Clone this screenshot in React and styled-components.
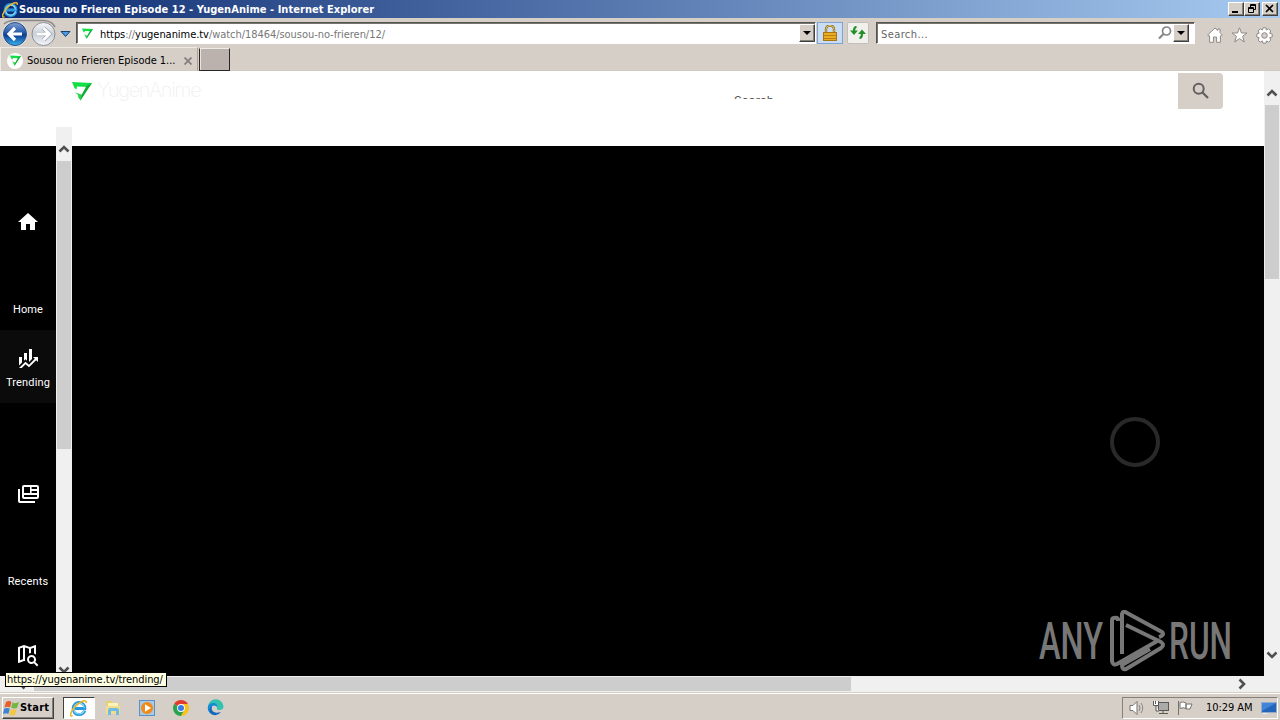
import React from "react";
import styled, { createGlobalStyle } from "styled-components";

const navItems = [
    { name: "Home", label: "Home", top: 64, gap: 68, bottom: 13 },
    { name: "Trending", label: "Trending", top: 16, gap: 5, bottom: 13, active: true },
    { name: "Recents", label: "Recents", top: 79, gap: 68, bottom: 13 },
    { name: "Discover", top: 41, gap: 0, bottom: 0 },
];

const navIcons = {
    Home: <path d="M10 20V14H14V20H19V12H22L12 3L2 12H5V20Z" />,
    Trending: (
        <path d="M6 16.5L3 19.44V11H6M11 14.66L9.43 13.32L8 14.64V7H11M16 13L13 16V3H16M18.81 12.81L17 11H22V16L20.21 14.21L13 21.36L9.53 18.34L5.75 22H3L9.47 15.66L13 18.64" />
    ),
    Recents: (
        <path
            fillRule="evenodd"
            d="M2 7H4V19H19V21H4Q2 21 2 19ZM8 3H21Q23 3 23 5V15Q23 17 21 17H8Q6 17 6 15V5Q6 3 8 3ZM8 5V11H14V5ZM15.6 5V7H21V5ZM15.6 9V11H21V9ZM8 13V15H21V13Z"
        />
    ),
    Discover: (
        <path
            fillRule="evenodd"
            d="M15.5 12A4.5 4.5 0 0 1 19.31 18.9L22.39 22L21 23.39L17.88 20.32A4.5 4.5 0 1 1 15.5 12M15.5 14A2.5 2.5 0 1 0 15.5 19A2.5 2.5 0 0 0 15.5 14M19.5 2A.5.5 0 0 1 20 2.5V11.81A6.4 6.4 0 0 0 18 10.5V4.7L15 5.86V10.03A6.4 6.4 0 0 0 13 10.5V5.87L9 4.47V16.13L9.03 16.12L9 16.5C9 17.14 9.09 17.76 9.26 18.34L8 17.9L2.66 19.97L2.5 20A.5.5 0 0 1 2 19.5V4.38C2 4.15 2.15 3.97 2.36 3.9L8 2L14 4.1L19.34 2.03ZM4 5.46V17.31L7 16.15V4.45Z"
        />
    ),
};

function BrandIcon({ size }) {
    return (
        <svg width={size} height={size} viewBox="0 0 20 20">
            <path d="M0 1L20 2L17 6L5 5.5L4.5 8.5L2.5 7Z" fill="#12df45" />
            <path d="M20 2L8.5 19.5L6.5 15.5L9.5 14L14.5 5Z" fill="#0cac31" />
            <path d="M3 11.5L9.5 13.5L9 19L6.5 17L6 14Z" fill="#25d64e" />
        </svg>
    );
}

function IeIcon({ size }) {
    return (
        <svg width={size} height={size} viewBox="0 0 18 18">
            <path
                d="M14.8 11.5C13.8 14.2 11.6 15.6 9 15.6C5.4 15.6 3.2 13 3.2 9.6C3.2 6.2 5.8 3.6 9 3.6C12.5 3.6 15 6.1 14.8 9.5H5"
                fill="none"
                stroke="#2a97dc"
                strokeWidth="3"
            />
            <path
                d="M14.5 10.8C13.2 14 11.2 15 9 15C5.5 15 3.8 12.5 3.8 9.6C3.8 6.7 6.1 4.3 9 4.3C12 4.3 14 6.2 14.2 9"
                fill="none"
                stroke="#8bdcfa"
                strokeWidth="1.2"
            />
            <path
                d="M2.7 16.6C-1 18.5.4 12.5 5.2 7.4C9.5 2.9 16.8-.9 16.2 4.2"
                fill="none"
                stroke="#e9b52c"
                strokeWidth="1.6"
            />
        </svg>
    );
}

function NavArrows() {
    return (
        <svg width="74" height="29" viewBox="0 0 74 29">
            <defs>
                <linearGradient id="back" x1="0" y1="0" x2="0" y2="1">
                    <stop offset="0" stopColor="#7ea0d3" />
                    <stop offset=".45" stopColor="#2458a8" />
                    <stop offset=".55" stopColor="#0b3d91" />
                    <stop offset="1" stopColor="#3fb4f0" />
                </linearGradient>
                <linearGradient id="forward" x1="0" y1="0" x2="0" y2="1">
                    <stop offset="0" stopColor="#f8f9fb" />
                    <stop offset=".5" stopColor="#c9cfd8" />
                    <stop offset="1" stopColor="#f4f7fa" />
                </linearGradient>
            </defs>
            <path
                d="M4 5Q8 1.5 15 1.5H44Q52 2 55 8"
                fill="none"
                stroke="#8b8a8b"
                strokeWidth="1.6"
            />
            <circle cx="15" cy="15" r="12.5" fill="#eeeef0" />
            <circle cx="15" cy="15" r="11.5" fill="url(#back)" stroke="#284d83" />
            <circle cx="43.5" cy="15" r="11.5" fill="url(#forward)" stroke="#8b8e94" />
            <path
                d="M22 15H10M15 9L9 15L15 21"
                fill="none"
                stroke="#fff"
                strokeWidth="3.2"
            />
            <path
                d="M36.5 15H48.5M43.5 9L49.5 15L43.5 21"
                fill="none"
                stroke="#9da3ac"
                strokeWidth="4.2"
            />
            <path
                d="M36.5 15H48.5M43.5 9L49.5 15L43.5 21"
                fill="none"
                stroke="#fff"
                strokeWidth="2.8"
            />
            <path d="M61 12.5H70L65.5 17.5Z" fill="#4c9be0" stroke="#174478" />
        </svg>
    );
}

function Chevron({ turn }) {
    return (
        <svg width="12" height="12" viewBox="0 0 12 12">
            <path
                d="M1.5 8.5L6 4L10.5 8.5"
                fill="none"
                stroke="#505050"
                strokeWidth="2.6"
                transform={`rotate(${turn} 6 6)`}
            />
        </svg>
    );
}

function DropButton() {
    return (
        <RaisedButton $w={16} $h={18}>
            <svg width="8" height="4" viewBox="0 0 8 4">
                <path d="M0 0H8L4 4Z" fill="#000" />
            </svg>
        </RaisedButton>
    );
}

function TitleBar() {
    return (
        <TitleStrip>
            <IeIcon size={17} />
            <Title>Sousou no Frieren Episode 12 - YugenAnime - Internet Explorer</Title>
            <WindowButtons>
                <RaisedButton $w={16} $h={14}>
                    <svg width="12" height="10">
                        <path d="M2 7H8V9H2Z" />
                    </svg>
                </RaisedButton>
                <RaisedButton $w={16} $h={14}>
                    <svg width="12" height="10" fill="none" stroke="#000">
                        <path d="M4.5 3V.5H9.5V5.5H8M4 1.5H10M2.5 3.5H7.5V8.5H2.5ZM2 4.5H8" />
                    </svg>
                </RaisedButton>
                <CloseGap />
                <RaisedButton $w={16} $h={14}>
                    <svg width="12" height="10">
                        <path d="M2 1L9 8M9 1L2 8" stroke="#000" strokeWidth="1.7" />
                    </svg>
                </RaisedButton>
            </WindowButtons>
        </TitleStrip>
    );
}

function AddressRow() {
    return (
        <Toolbar>
            <NavArrows />
            <AddressField>
                <BrandIcon size={11} />
                <Url>
                    <b>https</b>://<b>yugenanime.tv</b>/watch/18464/sousou-no-frieren/12/
                </Url>
                <DropButton />
            </AddressField>
            <LockButton>
                <svg width="14" height="16" viewBox="0 0 14 16">
                    <path d="M3 8V4.5A4 4 0 0 1 11 4.5V8" fill="none" stroke="#8d6b20" strokeWidth="2.4" />
                    <path d="M3 8V4.5A4 4 0 0 1 11 4.5V8" fill="none" stroke="#e5c765" />
                    <rect x=".5" y="7.5" width="13" height="8" fill="#e9ad22" stroke="#a87414" />
                    <path d="M1 10.5H13M1 13.5H13" stroke="#bd7f0e" />
                </svg>
            </LockButton>
            <RefreshButton>
                <svg width="16" height="14" viewBox="0 0 16 14">
                    <path d="M6.5 1Q4 1 4 5M9.5 12Q12 12 12 8" fill="none" stroke="#239129" strokeWidth="2.2" />
                    <path d="M0 4.5H8L4 9ZM8 8L12 3.5L16 8Z" fill="#239129" />
                </svg>
            </RefreshButton>
            <SearchField>
                <span>Search...</span>
                <svg width="14" height="14" viewBox="0 0 14 14" fill="none" stroke="#858585">
                    <circle cx="8.5" cy="5" r="4" strokeWidth="1.7" />
                    <path d="M5.5 8L1 12.5" strokeWidth="2.2" />
                </svg>
                <DropButton />
            </SearchField>
            <ToolIcons>
                <svg width="16" height="16" viewBox="0 0 16 16">
                    <path d="M.7 8L8 .9L10.8 3.5V2H13V5.6L15.3 8L14 9.3L13.4 8.8V15.3H9.6V10H6.4V15.3H2.6V8.8L2 9.3Z" />
                </svg>
                <svg width="17" height="16" viewBox="0 0 17 16">
                    <path d="M8.5.8L10.5 6H16L11.6 9.3L13.3 15L8.5 11.6L3.7 15L5.4 9.3L1 6H6.5Z" />
                </svg>
                <svg width="17" height="17" viewBox="0 0 17 17">
                    <path d="M7 .8H10L10.4 3L12.6 1.8L14.8 4L13.7 6.2L16.2 7V10L13.7 10.7L14.8 13L12.7 15.2L10.4 13.9L10 16.2H7L6.4 13.9L4.2 15.2L2.1 13L3.2 10.7L.8 10V7L3.2 6.2L2.1 4L4.2 1.8L6.4 3Z" />
                    <circle cx="8.5" cy="8.5" r="2.8" fill="#d5cfc8" />
                </svg>
            </ToolIcons>
        </Toolbar>
    );
}

function Tabs() {
    return (
        <TabStrip>
            <Tab>
                <TabIcon>
                    <BrandIcon size={11} />
                </TabIcon>
                <TabTitle>Sousou no Frieren Episode 1...</TabTitle>
                <svg width="8" height="8" viewBox="0 0 8 8">
                    <path d="M.5.5L7.5 7.5M7.5.5L.5 7.5" stroke="#858080" strokeWidth="1.8" />
                </svg>
            </Tab>
            <NewTab />
        </TabStrip>
    );
}

function Watermark() {
    return (
        <svg width="194" height="62" viewBox="0 0 194 62">
            <g fill="#777" fontFamily="Roboto, sans-serif" fontSize="51" fontWeight="500">
                <text x="1" y="49" textLength="64" lengthAdjust="spacingAndGlyphs">
                    ANY
                </text>
                <text x="131" y="49" textLength="63" lengthAdjust="spacingAndGlyphs">
                    RUN
                </text>
            </g>
            <g fill="none" stroke="#777" strokeWidth="4" strokeLinejoin="round">
                <path d="M80 11V9Q79 7 76 8Q74 8 74 11V51Q75 56 79 54L121 30" />
                <path d="M84 44V4Q85 0 89 3L124 22Q127 25 121 27" />
                <path d="M88 15L123 32Q127 35 123 38L88 59Q84 60 84 55L112 39" />
            </g>
        </svg>
    );
}

function Website() {
    return (
        <Page>
            <PageMain>
                <Header>
                    <BrandIcon size={20} />
                    <BrandName>YugenAnime</BrandName>
                    <SearchInput>
                        <span>Search</span>
                    </SearchInput>
                    <SearchButton>
                        <svg width="18" height="18" viewBox="0 0 18 18" fill="none" stroke="#626060">
                            <circle cx="6.7" cy="6.7" r="5" strokeWidth="2" />
                            <path d="M10.5 10.5L16 16" strokeWidth="2.3" />
                        </svg>
                    </SearchButton>
                </Header>
                <Body>
                    <SideNav>
                        {navItems.map((item) => (
                            <NavItem
                                key={item.name}
                                $top={item.top}
                                $bottom={item.bottom}
                                $gap={item.gap}
                                $active={item.active}
                            >
                                <svg width="24" height="24" viewBox="0 0 24 24" fill="#fff">
                                    {navIcons[item.name]}
                                </svg>
                                {item.label && <span>{item.label}</span>}
                            </NavItem>
                        ))}
                    </SideNav>
                    <ScrollBar $pad={16}>
                        <Chevron turn={0} />
                        <ScrollThumb $size={288} />
                        <Spacer />
                        <Chevron turn={180} />
                    </ScrollBar>
                    <Player>
                        <Spinner />
                        <Watermark />
                    </Player>
                </Body>
            </PageMain>
            <ScrollBar $pad={16} $end={15}>
                <Chevron turn={0} />
                <ScrollThumb $size={174} />
                <Spacer />
                <Chevron turn={180} />
            </ScrollBar>
        </Page>
    );
}

function Taskbar() {
    return (
        <TaskStrip>
            <StartButton>
                <svg width="17" height="16" viewBox="0 0 17 16">
                    <path d="M3 2Q6 0 8.5 2L7 7.5Q4.5 6 1.5 7.5Z" fill="#e75c29" />
                    <path d="M9.5 2.5Q12.5 4 16 2L14 8Q11 9 8.2 7.7Z" fill="#70b743" />
                    <path d="M1.2 8.7Q4 7.3 6.8 8.7L5.3 14Q3 12.5 0 14Z" fill="#3c83d1" />
                    <path d="M7.8 9Q10.5 10.5 13.7 9L12 15Q9 16 6.3 14.5Z" fill="#f5c640" />
                </svg>
                Start
            </StartButton>
            <TaskItem $active>
                <IeIcon size={18} />
            </TaskItem>
            <TaskItem>
                <svg width="16" height="16" viewBox="0 0 16 16">
                    <path d="M1 1H7L8 3H14V14H1Z" fill="#e7cf78" />
                    <path d="M3 3H13V8H3Z" fill="#fff4b8" />
                    <path d="M1 6H15V14H1Z" fill="#f3dc8d" />
                    <path d="M3 15V10Q3 8 5 8H12Q14 8 14 10V15H11V11H6V15Z" fill="#70bce0" />
                </svg>
            </TaskItem>
            <TaskItem>
                <svg width="16" height="16" viewBox="0 0 16 16">
                    <rect x=".5" y=".5" width="15" height="15" fill="#a9cae6" stroke="#5a90c4" />
                    <circle cx="8" cy="8" r="6" fill="#f28a18" />
                    <path d="M6 4.2L12 8L6 11.8Z" fill="#fff" />
                </svg>
            </TaskItem>
            <TaskItem>
                <svg width="16" height="16" viewBox="0 0 16 16">
                    <path d="M8 8L1.1 4A8 8 0 0 1 14.9 4Z" fill="#e33b2e" />
                    <path d="M8 8L1.1 4A8 8 0 0 0 8 16L11.4 10Z" fill="#2ba24c" />
                    <path d="M8 4H14.9A8 8 0 0 1 8 16L11.5 10Z" fill="#fbc116" />
                    <circle cx="8" cy="8" r="3.9" fill="#fff" />
                    <circle cx="8" cy="8" r="3" fill="#397de7" />
                </svg>
            </TaskItem>
            <TaskItem>
                <svg width="17" height="17" viewBox="0 0 17 17">
                    <path d="M1 8A7.7 7.7 0 0 1 16.5 8Q16 11 12 11Q9.5 11 10 9Q10 6 6 6Q2 6 1 9Z" fill="#35c1b0" />
                    <path d="M.8 9Q2 5 6 6Q4 8 5 11Q7 15 14 13Q10 18 5 15.5Q1 13 .8 9Z" fill="#1268bd" />
                    <path d="M.8 8Q2 4 6.5 4Q10 4 10.5 8Q8 5.5 5 7Q2 9 3 13Q.5 11 .8 8Z" fill="#1688d8" />
                </svg>
            </TaskItem>
            <Spacer />
            <Tray>
                <svg width="17" height="16" viewBox="0 0 17 16" fill="#fff" stroke="#77736e">
                    <path d="M1 5.5H4L8 1.5V14.5L4 10.5H1Z" />
                    <path d="M10 5Q12 8 10 11M12 3Q15.5 8 12 13" fill="none" stroke="#89857f" />
                </svg>
                <svg width="17" height="16" viewBox="0 0 17 16" fill="#fff" stroke="#5b5855">
                    <rect x="5.5" y="2.5" width="10" height="8" fill="#aaa" />
                    <path d="M6 13.5H15M10 11V13M.5 1V5.5H5.5V1M2.5 1V4M3 6V11H6" />
                </svg>
                <svg width="17" height="16" viewBox="0 0 17 16" fill="#fff" stroke="#77736e">
                    <path d="M1.5 1V15M3 2.5Q6 1 9 3V8.5Q6 7 3 8.5ZM9 4H15L13 9H9Z" />
                </svg>
                <Clock>10:29 AM</Clock>
                <svg width="16" height="14" viewBox="0 0 16 14">
                    <rect x=".5" y="1.5" width="15" height="10" fill="#2564bb" stroke="#92aacb" />
                    <path d="M1 2H15L1 10Z" fill="#4384d6" />
                    <path d="M2 12.5H6" stroke="#eee" />
                </svg>
            </Tray>
        </TaskStrip>
    );
}

function App() {
    return (
        <Screen>
            <GlobalStyle />
            <TitleBar />
            <AddressRow />
            <Tabs />
            <Website />
            <BottomScroll>
                <Chevron turn={-90} />
                <BottomThumb />
                <Spacer />
                <Chevron turn={90} />
            </BottomScroll>
            <Taskbar />
            <StatusTip>https://yugenanime.tv/trending/</StatusTip>
        </Screen>
    );
}

const GlobalStyle = createGlobalStyle`
    * {
        box-sizing: border-box;
    }
    body {
        margin: 0;
        overflow: hidden;
    }
    svg {
        display: block;
        flex: none;
    }
`;

const Screen = styled.div`
    position: relative;
    display: flex;
    flex-direction: column;
    width: 1280px;
    height: 720px;
    overflow: hidden;
    background: #d5cfc8;
    color: #000;
    font: 11px "DejaVu Sans Condensed", "DejaVu Sans", sans-serif;
    white-space: nowrap;
`;

const Spacer = styled.div`
    flex: 1;
`;

const RaisedButton = styled.div`
    display: flex;
    flex: none;
    align-items: center;
    justify-content: center;
    width: ${(props) => props.$w}px;
    height: ${(props) => props.$h}px;
    background: #d5cfc8;
    border: 1px solid;
    border-color: #fff #404040 #404040 #fff;
    box-shadow: inset -1px -1px #858078;
`;

const TitleStrip = styled.div`
    display: flex;
    align-items: center;
    height: 18px;
    padding: 0 2px;
    background: linear-gradient(90deg, #0d2c72, #a6caf0);
`;

const Title = styled.span`
    color: #fff;
    font-weight: bold;
    letter-spacing: 0.04px;
`;

const WindowButtons = styled.div`
    display: flex;
    margin-left: auto;
`;

const CloseGap = styled.div`
    width: 2px;
`;

const Toolbar = styled.div`
    display: flex;
    align-items: flex-start;
    height: 29px;
    padding: 1px 0 0;
`;

const Field = styled.div`
    display: flex;
    align-items: center;
    height: 22px;
    margin-top: 3px;
    background: #fff;
    border: 1px solid;
    border-color: #57534f #fff #fff #57534f;
    box-shadow: inset 1px 1px #77736e;
`;

const AddressField = styled(Field)`
    width: 740px;
    margin-left: 2px;
    padding: 0 0 0 5px;
`;

const Url = styled.span`
    flex: 1;
    margin-left: 7px;
    padding-top: 2px;
    color: #777;
    letter-spacing: -0.05px;

    b {
        color: #000;
        font-weight: normal;
    }
`;

const LockButton = styled.div`
    display: flex;
    align-items: center;
    justify-content: center;
    width: 26px;
    height: 22px;
    margin: 3px 0 0 1px;
    background: #c9ddf5;
    border: 1px solid #7da4d8;
`;

const RefreshButton = styled.div`
    display: flex;
    align-items: center;
    justify-content: center;
    width: 22px;
    height: 22px;
    margin: 3px 0 0 4px;
    background: #f1f0ed;
    border: 1px solid #c3c0ba;
    border-radius: 2px;
`;

const SearchField = styled(Field)`
    width: 319px;
    margin-left: 7px;
    padding: 0 5px 0 4px;

    span {
        flex: 1;
        padding-top: 2px;
        color: #666;
        letter-spacing: 0.4px;
    }
    svg + div {
        margin-left: 1px;
    }
`;

const ToolIcons = styled.div`
    display: flex;
    gap: 8px;
    margin: 8px 0 0 12px;

    svg {
        fill: #fff;
        stroke: #8e8a86;
    }
`;

const TabStrip = styled.div`
    display: flex;
    height: 24px;
    border-bottom: 1px solid #d0c8c2;
`;

const Tab = styled.div`
    display: flex;
    align-items: center;
    width: 198px;
    height: 24px;
    padding: 2px 5px 0 7px;
    border: 1px solid #eeeae6;
    border-right-color: #aaa39c;
    border-bottom: 0;
`;

const TabIcon = styled.div`
    display: flex;
    align-items: center;
    justify-content: center;
    width: 16px;
    height: 16px;
    margin-left: -1px;
    background: #fff;
    border-radius: 50%;
`;

const TabTitle = styled.span`
    flex: 1;
    margin-left: 4px;
    letter-spacing: -0.04px;
`;

const NewTab = styled.div`
    width: 31px;
    height: 23px;
    margin: 1px 0 0 1px;
    background: #bbb2ad;
    border: 1px solid #292725;
    border-top-color: #eeeae6;
    box-shadow: inset 1px 0 #e8e4df;
`;

const Page = styled.div`
    display: flex;
    height: 605px;
`;

const PageMain = styled.div`
    width: 1264px;
    background: #fff;
`;

const Header = styled.div`
    display: flex;
    align-items: flex-start;
    height: 56px;
    padding: 2px 41px 0 72px;

    > svg {
        margin-top: 8px;
    }
`;

const BrandName = styled.span`
    width: 110px;
    margin: 4px 0 0 5px;
    color: #f1f1f1;
    font: 200 20px/26px Inter, sans-serif;
    letter-spacing: -1.4px;
`;

/* the field is too short for its line, so only the top of the text shows */
const SearchInput = styled.div`
    flex: 1;
    height: 7px;
    margin: 19px 0 0 527px;
    overflow: hidden;
    color: #555;
    font: 12px/18px Inter, sans-serif;
`;

const SearchButton = styled.div`
    display: flex;
    align-items: center;
    justify-content: center;
    width: 45px;
    height: 36px;
    background: #d5cfc8;
    border-radius: 0 4px 4px 0;
`;

const Body = styled.div`
    display: flex;
    height: 549px;
`;

const SideNav = styled.div`
    width: 56px;
    overflow: hidden;
    background: #000;
    border-top: 19px solid #fff;
`;

const NavItem = styled.div`
    display: flex;
    flex-direction: column;
    align-items: center;
    gap: ${(props) => props.$gap}px;
    padding: ${(props) => props.$top}px 0 ${(props) => props.$bottom}px;
    background: ${(props) => (props.$active ? "#0b0b0b" : "#000")};
    color: #fff;
    font: 400 11px/15px Roboto, sans-serif;
    letter-spacing: 0.15px;
`;

const ScrollBar = styled.div`
    display: flex;
    flex-direction: column;
    align-items: center;
    width: 16px;
    padding: ${(props) => props.$pad}px 0 ${(props) => props.$end || 0}px;
    background: #f0f0f0;
`;

const ScrollThumb = styled.div`
    width: 14px;
    height: ${(props) => props.$size}px;
    margin-top: 6px;
    background: #cdcdcd;
`;

const Player = styled.div`
    display: flex;
    flex: 1;
    flex-direction: column;
    align-items: flex-end;
    justify-content: space-between;
    padding: 271px 32px 4px 0;
    background: #000;
    border-top: 19px solid #fff;
`;

const Spinner = styled.div`
    width: 50px;
    height: 50px;
    margin-right: 72px;
    border: 4px solid #292929;
    border-radius: 50%;
`;

const BottomScroll = styled.div`
    display: flex;
    align-items: center;
    height: 16px;
    padding: 0 32px 0 16px;
    background: #f0f0f0;
`;

const BottomThumb = styled.div`
    width: 817px;
    height: 14px;
    margin-left: 6px;
    background: #cdcdcd;
`;

const TaskStrip = styled.div`
    display: flex;
    align-items: center;
    height: 28px;
    padding: 2px 2px 0;
    border-top: 1px solid #d5cfc8;
    box-shadow: inset 0 1px #fff;
`;

const StartButton = styled.div`
    display: flex;
    align-items: center;
    width: 52px;
    height: 22px;
    margin-right: 9px;
    border: 1px solid;
    border-color: #fff #404040 #404040 #fff;
    box-shadow: inset -1px -1px #858078;
    font-weight: bold;
    letter-spacing: 0.2px;
`;

const TaskItem = styled.div`
    display: flex;
    align-items: center;
    justify-content: center;
    width: ${(props) => (props.$active ? 32 : 34)}px;
    height: 22px;
    margin-right: ${(props) => (props.$active ? 1 : 0)}px;
    background: ${(props) => (props.$active ? "#fff" : "none")};
    border: ${(props) => (props.$active ? "1px solid" : "0")};
    border-color: #404040 #fff #fff #404040;
`;

const Tray = styled.div`
    display: flex;
    align-items: center;
    gap: 7px;
    width: 156px;
    height: 22px;
    padding-left: 6px;
    border: 1px solid;
    border-color: #858078 #fff #fff #858078;
`;

const Clock = styled.span`
    width: 48px;
    margin-left: 5px;
    letter-spacing: -0.05px;
`;

const StatusTip = styled.div`
    position: absolute;
    left: 5px;
    top: 672px;
    width: 162px;
    height: 15px;
    padding-left: 1px;
    background: #ffffe1;
    border: 1px solid #000;
    line-height: 13px;
    letter-spacing: -0.08px;
`;

export default App;
